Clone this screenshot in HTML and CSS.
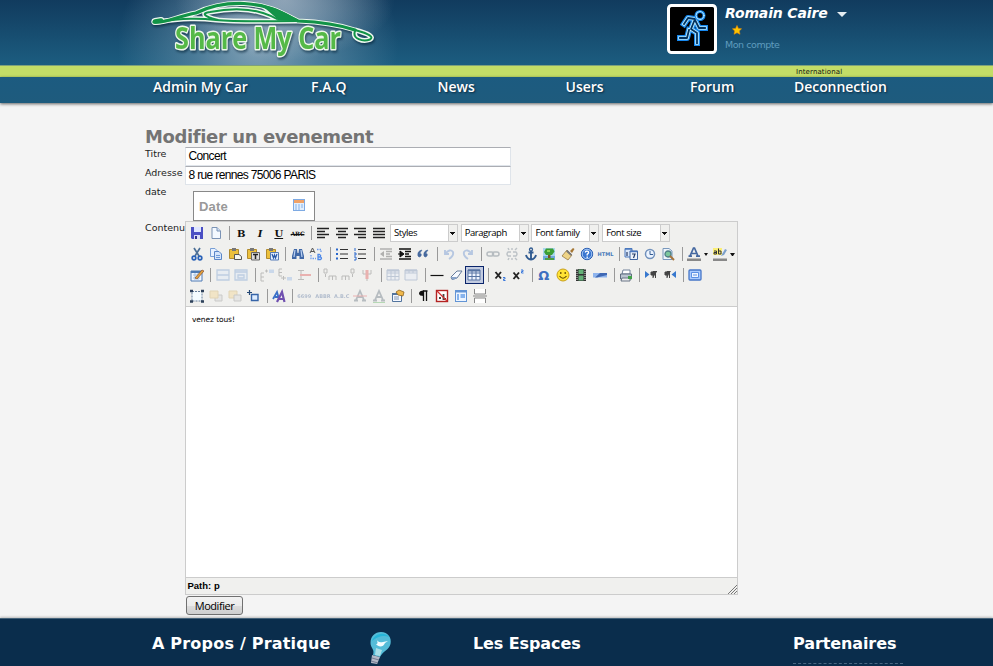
FILE: index.html
```html
<!DOCTYPE html>
<html lang="fr">
<head>
<meta charset="utf-8">
<title>Share My Car</title>
<link rel="stylesheet" href="styles.css">
</head>
<body>
<header class="top">
  <a class="logo">
    <svg width="234" height="62" viewBox="0 0 234 62">
      <g fill="none" stroke-linecap="round" stroke-linejoin="round">
        <g stroke="#eef7f1" stroke-width="5"><path d="M8 22C18 24 32 16 50 13C64 6 82 3 98 3.500C125 5 138 14 152 21C176 22 194 25 209 30C224 34 228 37 224 39.500C217 42 206 39 209 31M8 22C40 18 53 18 70 20C92 22 122 21 150 21M72 20C56 16 56 13 64 12C84 8 110 7 131 19"/><path d="M9 21.500L15 20.500" stroke-width="7"/></g>
        <path d="M114 5C130 8 142 15 154 21L131 20Z" fill="#129347" stroke="#eef7f1" stroke-width="2"/>
        <g stroke="#129347" stroke-width="2"><path stroke-width="3.200" d="M8 22C18 24 32 16 50 13C64 6 82 3 98 3.500C125 5 138 14 152 21C176 22 194 25 209 30"/><path d="M209 30C224 34 228 37 224 39.500C217 42 206 39 209 31M8 22C40 18 53 18 70 20C92 22 122 21 150 21M72 20C56 16 56 13 64 12C84 8 110 7 131 19"/><path d="M9 21.500L15 20.500" stroke-width="4.500"/></g>
        <path d="M112 4C130 7 142 14 154 21L131 20.500L133 17Z" fill="#129347"/>
      </g>
      <text class="brand" x="29" y="49" textLength="166" lengthAdjust="spacingAndGlyphs">Share My Car</text>
    </svg>
  </a>
  <div class="account">
    <svg class="avatar" width="50" height="50" viewBox="0 0 50 50">
      <rect x="1.500" y="1.500" width="47" height="47" rx="3" fill="#000" stroke="#fff" stroke-width="3"/>
      <g fill="none" stroke-linecap="square" stroke-linejoin="round">
        <path d="M17 20L21 14L28 15L24 25L30 29V39M28 16L32 24H38M22 26L20 34H13" stroke="#1688ef" stroke-width="6"/>
        <path d="M17 20L21 14L28 15L24 25L30 29V39M28 16L32 24H38M22 26L20 34H13" stroke="#b9eaff" stroke-width="3.600"/>
        <path d="M17 20L21 14L28 15L24 25L30 29V39M28 16L32 24H38M22 26L20 34H13" stroke="#02315e" stroke-width="1.800"/>
        <circle cx="33" cy="11.500" r="4" stroke="#1688ef" stroke-width="3"/><circle cx="33" cy="11.500" r="4" stroke="#b9eaff"/>
      </g>
    </svg>
    <div class="who">
      <div class="name"><span>Romain Caire</span><i class="caret"></i></div>
      <svg class="star" width="10" height="10" viewBox="0 0 10 10"><path d="M5 .4L6.400 3.400L9.600 3.700L7.300 6L8 9.300L5 7.700L2 9.300L2.700 6L.4 3.700L3.600 3.400Z" fill="#ffc400" stroke="#e88c00" stroke-width=".6"/></svg>
      <div class="mon">Mon compte</div>
    </div>
  </div>
</header>
<div class="strip"><span>International</span></div>
<nav class="menu">
  <a class="m1">Admin My Car</a><a>F.A.Q</a><a>News</a><a>Users</a><a>Forum</a><a>Deconnection</a>
</nav>

<main class="page">
  <h1><span>Modifier un evenement</span></h1>
  <form class="form">
    <label>Titre</label><div class="input"><span>Concert</span></div>
    <label>Adresse</label><div class="input"><span>8 rue rennes 75006 PARIS</span></div>
    <label>date</label>
    <div class="date"><span>Date</span>
      <svg width="12" height="12" viewBox="0 0 12 12"><rect x=".5" y=".5" width="11" height="11" fill="#e3effc" stroke="#7eaae3"/><path d="M1 1H11V4H1Z" fill="#f0a267"/><path d="M2 6H10M2 8H10M2 10H8" stroke="#86b2ea" stroke-dasharray="2 1"/></svg>
    </div>
    <label>Contenu</label>
    <div class="editor">
      <div class="tools">
        <div class="row">
          <b><svg viewBox="0 0 14 14"><path d="M1 1H13V13H2L1 12Z" fill="#4a4fc4"/><path d="M4 1H11V6H4Z" fill="#dfe6ff"/><path d="M4 9H10V13H4Z" fill="#d9dcf5"/><path d="M5 10H7V13H5Z" fill="#303090"/></svg></b>
          <b><svg viewBox="0 0 14 14"><path d="M3 1.500H8L11.500 5V12.500H3Z" fill="#f4f9ff" stroke="#7b93b5"/><path d="M8 1.500V5H11.500" fill="#cfe0f5" stroke="#7b93b5"/></svg></b><i></i>
          <b class="g">B</b><b class="g it">I</b><b class="g un">U</b><b class="g abc">ABC</b><i></i>
          <b><svg viewBox="0 0 14 14"><path d="M1 2.500H13M1 5.500H9M1 8.500H13M1 11.500H9" stroke="#222" stroke-width="1.400"/></svg></b>
          <b><svg viewBox="0 0 14 14"><path d="M1 2.500H13M3 5.500H11M1 8.500H13M3 11.500H11" stroke="#222" stroke-width="1.400"/></svg></b>
          <b><svg viewBox="0 0 14 14"><path d="M1 2.500H13M5 5.500H13M1 8.500H13M5 11.500H13" stroke="#222" stroke-width="1.400"/></svg></b>
          <b><svg viewBox="0 0 14 14"><path d="M1 2.500H13M1 5.500H13M1 8.500H13M1 11.500H13" stroke="#222" stroke-width="1.400"/></svg></b>
          <div class="sel"><span>Styles</span></div><div class="sel"><span>Paragraph</span></div><div class="sel"><span>Font family</span></div><div class="sel"><span>Font size</span></div>
        </div>
        <div class="row">
          <b><svg viewBox="0 0 14 14"><path d="M4 1L9 9M10 1L5 9" stroke="#4c6f96" stroke-width="1.700"/><circle cx="4" cy="11" r="1.800" fill="none" stroke="#2a62b8" stroke-width="1.700"/><circle cx="10" cy="11" r="1.800" fill="none" stroke="#2a62b8" stroke-width="1.700"/></svg></b>
          <b><svg viewBox="0 0 14 14"><path d="M1.500 1.500H6L8.500 4V9.500H1.500Z" fill="#e8f1ff" stroke="#789fd5"/><path d="M5.500 4.500H10L12.500 7V12.500H5.500Z" fill="#d4e4fb" stroke="#5a86c8"/><path d="M7 8.500H11M7 10.500H11" stroke="#6d99d8"/></svg></b>
          <b><svg viewBox="0 0 14 14"><path d="M1.500 2.500H10.500V11.500H1.500Z" fill="#ecc03c" stroke="#b08a2e"/><path d="M4 1H8V4H4Z" fill="#777"/><path d="M6.500 7.500H11L13.500 9.500V12.500H6.500Z" fill="#f7f7ee" stroke="#555"/></svg></b>
          <b><svg viewBox="0 0 14 14"><path d="M1.500 2.500H10.500V11.500H1.500Z" fill="#ecc03c" stroke="#b08a2e"/><path d="M4 1H8V4H4Z" fill="#777"/><path d="M5.500 5.500H13.500V13H5.500Z" fill="#ddd" stroke="#666"/><path d="M7 7.500H12M9.500 7V12" stroke="#222" stroke-width="1.500"/></svg></b>
          <b><svg viewBox="0 0 14 14"><path d="M1.500 2.500H10.500V11.500H1.500Z" fill="#ecc03c" stroke="#b08a2e"/><path d="M4 1H8V4H4Z" fill="#777"/><path d="M5.500 5.500H13.500V13H5.500Z" fill="#e4eeff" stroke="#557bb8"/><path d="M7 7L8.500 11L9.500 8L10.500 11L12 7" fill="none" stroke="#2757a8" stroke-width="1.200"/></svg></b><i></i>
          <b><svg viewBox="0 0 14 14"><path d="M3 2H6L6.500 6H7.500L8 2H11L13 9V12H8.500V9H5.500V12H1V9Z" fill="#4169a8"/><path d="M4 3L3 10M10 3L11 10" stroke="#bcd2f3" stroke-width="1.200"/></svg></b>
          <b><svg viewBox="0 0 14 14"><path d="M1 6L3.500 1L6 6M2 4.500H5" fill="none" stroke="#555"/><path d="M9 7.500V12.500H11.500Q13.500 11.200 11.500 10H9H11Q12.500 8.500 10.500 7.500Z" fill="none" stroke="#4c88e8" stroke-width="1.300"/><path d="M8 2.500H12V5M2 8V11.500H7" fill="none" stroke="#6a9aec" stroke-width="1.300" stroke-dasharray="1.500 1"/></svg></b><i></i>
          <b><svg viewBox="0 0 14 14"><path d="M5 2.500H13M5 7H13M5 11.500H13" stroke="#333" stroke-width="1.200"/><path d="M1 2.500H3M1 7H3M1 11.500H3" stroke="#2867cd" stroke-width="2"/></svg></b>
          <b><svg viewBox="0 0 14 14"><path d="M5 2.500H13M5 7H13M5 11.500H13" stroke="#333" stroke-width="1.200"/><path d="M2 1V4M1 6H3V8H1M1 10H3V13H1" stroke="#2867cd" fill="none"/></svg></b><i></i>
          <b class="off"><svg viewBox="0 0 14 14"><path d="M1 2H13M7 4.500H13M7 7H11M7 9.500H13M1 12H13" stroke="#333" stroke-width="1.300"/><path d="M5 4V10L1 7ZM4 7H6" fill="#333"/></svg></b>
          <b><svg viewBox="0 0 14 14"><path d="M1 2H13M7 4.500H13M7 7H11M7 9.500H13M1 12H13" stroke="#111" stroke-width="1.400"/><path d="M2 4V10L6 7ZM0 7H3" fill="#111" stroke="#111"/></svg></b>
          <b><svg viewBox="0 0 14 14"><path d="M6 3Q1 4 2 9Q3 11 5 9Q6 6 3.500 6.500ZM12 3Q7 4 8 9Q9 11 11 9Q12 6 9.500 6.500Z" fill="#45689d" stroke="#45689d" stroke-width=".6"/></svg></b><i></i>
          <b class="off"><svg viewBox="0 0 14 14"><path d="M3 3V7H7M3 7Q8 1 11 5Q12 9 7 12" fill="none" stroke="#4477c8" stroke-width="1.900"/></svg></b>
          <b class="off"><svg viewBox="0 0 14 14"><path d="M11 3V7H7M11 7Q6 1 3 5Q2 9 7 12" fill="none" stroke="#4477c8" stroke-width="1.900"/></svg></b><i></i>
          <b class="off"><svg viewBox="0 0 14 14"><rect x="1" y="5" width="6.500" height="4" rx="2" fill="none" stroke="#456" stroke-width="1.500"/><rect x="6.500" y="5" width="6.500" height="4" rx="2" fill="none" stroke="#456" stroke-width="1.500"/></svg></b>
          <b class="off"><svg viewBox="0 0 14 14"><path d="M6 5H3Q1 7 3 9H6M8 5H11Q13 7 11 9H8M4 3L3 1M7 3V1M10 3L12 1M4 11L3 13M7 11V13M10 11L12 13" fill="none" stroke="#567" stroke-width="1.400"/></svg></b>
          <b><svg viewBox="0 0 14 14"><circle cx="7" cy="2.500" r="1.500" fill="none" stroke="#315b91" stroke-width="1.300"/><path d="M7 4V12M4.500 5.500H9.500M2 8Q3 12 7 12.500Q11 12 12 8" fill="none" stroke="#315b91" stroke-width="1.900"/></svg></b>
          <b><svg viewBox="0 0 14 14"><path d="M1 1H13V9H1Z" fill="#a9d7ef"/><path d="M1 9H13V13H1Z" fill="#6fa9dc"/><path d="M6 7H8.500V12H6Z" fill="#7a5125"/><path d="M3 11H12V13H3Z" fill="#4b9e41"/><path d="M4 1.500H11L12.500 4.500L10 8H4L2 5Z" fill="#3c9d35"/><path d="M5 3H8V5H5Z" fill="#8ad45a"/></svg></b>
          <b><svg viewBox="0 0 14 14"><path d="M9 4L12 1L13.500 2L11 6Z" fill="#a67733"/><path d="M6 3L11 8L7 13L1 9Z" fill="#efd486" stroke="#8b6c31" stroke-width=".7"/><path d="M6.500 3L11 7.500L10 9L5 4.500Z" fill="#777"/></svg></b>
          <b><svg viewBox="0 0 14 14"><circle cx="7" cy="7" r="5.700" fill="#3976d1" stroke="#2357ad"/><circle cx="7" cy="7" r="4.800" fill="none" stroke="#a9caf5"/><path d="M5.200 5.500Q6 3.500 8 4.300Q9.500 5.800 7.200 7.200V8.500M7.200 9.500V11" fill="none" stroke="#fff" stroke-width="1.300"/></svg></b>
          <b class="g html">HTML</b><i></i>
          <b><svg viewBox="0 0 14 14"><path d="M1 1.500H8V10H1Z" fill="#dce9fb" stroke="#4b78be"/><path d="M6 4H13.500V12.500H6Z" fill="#edf3fb" stroke="#4166a2"/><path d="M1 2H8M6 4.500H13.500" stroke="#4b78be" stroke-width="1.700"/><path d="M3 5V9M8 7H11L9.500 11" fill="none" stroke="#263c67" stroke-width="1.200"/></svg></b>
          <b><svg viewBox="0 0 14 14"><circle cx="7" cy="7" r="4.500" fill="#ecf4ff" stroke="#7191bc" stroke-width="1.500"/><path d="M7 4V7.500H10" fill="none" stroke="#345c92"/></svg></b>
          <b><svg viewBox="0 0 14 14"><path d="M2 1.500H8L11 4V12.500H2Z" fill="#eef4fb" stroke="#7998bd"/><circle cx="7" cy="7" r="3" fill="#7cc79c" stroke="#4e7f86" stroke-width="1.300"/><path d="M9 9L13 13" stroke="#a5733b" stroke-width="2"/></svg></b><i></i>
          <b class="color"><svg viewBox="0 0 14 14"><path d="M3 9L6.500 1H7.500L11 9M4.500 6.500H9.500M1.500 9.200H5M9 9.200H13" fill="none" stroke="#4568a0" stroke-width="1.700"/><path d="M0 11.500H14V14H0Z" fill="#888"/></svg></b><u></u>
          <b class="color"><svg viewBox="0 0 14 14"><path d="M0 1H9V8H0Z" fill="#fbef77"/><path d="M1 4H3.500V7H1V5.500H3.500M5.500 1.500V7H8V4H5.500" fill="none" stroke="#333"/><path d="M8 9L12 2L14 3L11 8Z" fill="#7b9fc9"/><path d="M0 11.500H14V14H0Z" fill="#888"/></svg></b><u></u>
        </div>
        <div class="row">
          <b><svg viewBox="0 0 14 14"><path d="M1 3H12V13H1Z" fill="#f2f7ff" stroke="#4e7bb4"/><path d="M1 4H12" stroke="#4e7bb4" stroke-width="2"/><path d="M3 7H10M3 10H10M5 5V12M8 5V12" stroke="#a9c3e1"/><path d="M5 10L12 2L14 3L7 11Z" fill="#e5a43c" stroke="#884d2b" stroke-width=".7"/></svg></b><i></i>
          <b class="off"><svg viewBox="0 0 14 14"><path d="M1 2H13V12H1ZM1 7H13" fill="#d5e4fb" stroke="#5b8bca" stroke-width="1.300"/></svg></b>
          <b class="off"><svg viewBox="0 0 14 14"><path d="M1 2H13V12H1ZM1 4H13M4 7H10V10H4Z" fill="#d5e4fb" stroke="#5b8bca" stroke-width="1.300"/></svg></b><i></i>
          <b class="off"><svg viewBox="0 0 14 14"><path d="M4 5H1V13H4M1 9H4M5 3H8M6.500 1.500V4.500" stroke="#555" fill="none"/><path d="M9 1.500H14V5H9Z" fill="#7fa8e2"/></svg></b>
          <b class="off"><svg viewBox="0 0 14 14"><path d="M4 1H1V8H4M1 4.500H4M3 10H8M5.500 8V12" stroke="#555" fill="none"/><path d="M9 9H14V12.500H9Z" fill="#7fa8e2"/></svg></b>
          <b class="off"><svg viewBox="0 0 14 14"><path d="M1 2.500H7M1 11.500H7M4 3V11" stroke="#555"/><path d="M3 7H14" stroke="#d33" stroke-width="2"/></svg></b><i></i>
          <b class="off"><svg viewBox="0 0 14 14"><path d="M1 1H4V5H1ZM2.500 6V9M6 12V8H13V12M9.500 8V12" fill="none" stroke="#555"/></svg></b>
          <b class="off"><svg viewBox="0 0 14 14"><path d="M10 1H13V5H10ZM11.500 6V9M1 12V8H8V12M4.500 8V12" fill="none" stroke="#555"/></svg></b>
          <b class="off"><svg viewBox="0 0 14 14"><path d="M3 2V6H11V2M7 6V13" fill="none" stroke="#555"/><path d="M7 2V11" stroke="#d33" stroke-width="3"/></svg></b><i></i>
          <b class="off"><svg viewBox="0 0 14 14"><path d="M1 2H13V12H1ZM1 5H13M1 8.500H13M5 2V12M9 2V12" fill="#e3ecfd" stroke="#5b78a8"/><path d="M1 2.500H13" stroke="#5b78a8" stroke-width="2"/></svg></b>
          <b class="off"><svg viewBox="0 0 14 14"><path d="M1 2H13V12H1ZM1 5H13M5 2V5M9 2V5" fill="#e3ecfd" stroke="#5b78a8"/><path d="M1 2.500H13" stroke="#5b78a8" stroke-width="2"/></svg></b><i></i>
          <b><svg viewBox="0 0 14 14"><path d="M.5 7.500H13.500" stroke="#111" stroke-width="1.200"/></svg></b>
          <b><svg viewBox="0 0 14 14"><path d="M2 9L8 3H13L8 10L3 11.500Z" fill="#f7faff" stroke="#667c9c"/><path d="M2 9H7L8 10L4 12Z" fill="#88a3ca"/></svg></b>
          <b class="on"><svg viewBox="0 0 14 14"><path d="M1 2H13V12H1ZM1 5H13M1 8.500H13M5 2V12M9 2V12" fill="#eef4ff" stroke="#5875a4"/><path d="M1 2.500H13" stroke="#5875a4" stroke-width="2"/></svg></b><i></i>
          <b><svg viewBox="0 0 14 14"><path d="M2.500 4L8 10.500M8 4L2.500 10.500" stroke="#222" stroke-width="1.900"/><path d="M10 9.500H12V11H10.500V12.500H12.500" fill="none" stroke="#3a78dc"/></svg></b>
          <b><svg viewBox="0 0 14 14"><path d="M2.500 4.500L8 11M8 4.500L2.500 11" stroke="#222" stroke-width="1.900"/><path d="M10 2H12V3.500H10.500V5H12.500" fill="none" stroke="#3a78dc"/></svg></b><i></i>
          <b class="g omega">Ω</b>
          <b><svg viewBox="0 0 14 14"><circle cx="7" cy="7" r="6" fill="#ffe334" stroke="#c9a01a"/><path d="M4.800 4V6M9.200 4V6M3.500 8Q7 12.500 10.500 8" fill="none" stroke="#5f4800" stroke-width="1.200"/></svg></b>
          <b><svg viewBox="0 0 14 14"><path d="M2 1H12V13H2Z" fill="#333"/><path d="M4.500 1.500H9.500V6H4.500ZM4.500 7.500H9.500V12.500H4.500Z" fill="#65b278"/><path d="M3 1V13M11 1V13" stroke="#ddd" stroke-dasharray="1 1"/></svg></b>
          <b><svg viewBox="0 0 14 14"><path d="M0 5H14V9.500H0Z" fill="#8eb4ed"/><path d="M7 5H14V7L4 9.500H2Z" fill="#4069b4"/></svg></b><i></i>
          <b><svg viewBox="0 0 14 14"><path d="M4 2H11V6H3Z" fill="#fff" stroke="#72839b"/><path d="M1.500 6H12.500V11H1.500Z" fill="#bac4d0" stroke="#5f6d7e"/><path d="M3 10H11V13H2Z" fill="#eee" stroke="#687586"/><path d="M9 8H13V11H9Z" fill="#40a047"/></svg></b><i></i>
          <b><svg viewBox="0 0 14 14"><path d="M1 3L5.500 6.500L1 10Z" fill="#3778ce"/><path d="M9 10V3.500H13M11.500 4V10M9 4H7V7H9Z" fill="#444" stroke="#444"/></svg></b>
          <b><svg viewBox="0 0 14 14"><path d="M13 3L8.500 6.500L13 10Z" fill="#3778ce"/><path d="M4 10V3.500H7.500M6.500 4V10M4 4H2V7H4Z" fill="#444" stroke="#444"/></svg></b><i></i>
          <b><svg viewBox="0 0 14 14"><rect x="1" y="2" width="12" height="10" rx="1" fill="#aaccff" stroke="#4777c8" stroke-width="1.300"/><path d="M3.500 4.500H10.500V9.500H3.500Z" fill="#eff6ff" stroke="#5c91e4"/><path d="M5 7H9" stroke="#5c91e4"/></svg></b>
        </div>
        <div class="row">
          <b><svg viewBox="0 0 14 14"><path d="M2 2.500H12V12H2Z" fill="#f5fcff" stroke="#677f9c" stroke-dasharray="2 1"/><path d="M0 2H3M11 2H14M0 12.500H3M11 12.500H14" stroke="#2d405a" stroke-width="2.500"/></svg></b>
          <b class="off2"><svg viewBox="0 0 14 14"><path d="M6 6H13V12H6Z" fill="#ddd" stroke="#aaa"/><path d="M1 2H9V9H1Z" fill="#f3dba6" stroke="#d5bd8a"/></svg></b>
          <b class="off2"><svg viewBox="0 0 14 14"><path d="M1 2H9V9H1Z" fill="#f3dba6" stroke="#d5bd8a"/><path d="M6 6H13V12H6Z" fill="#ddd" stroke="#aaa"/></svg></b>
          <b><svg viewBox="0 0 14 14"><path d="M5.500 5.500H12V11.500H5.500Z" fill="#ddecff" stroke="#3664a8" stroke-width="1.400"/><path d="M3.500 1V6M1 3.500H6" stroke="#244875" stroke-width="1.200"/></svg></b><i></i>
          <b><svg viewBox="0 0 14 14"><path d="M1 10L5 3L7 10M3 8H7" fill="none" stroke="#3a70c8" stroke-width="1.800"/><path d="M5 13L10 3L12.500 13M7 10H12" fill="none" stroke="#7050b0" stroke-width="2.200"/></svg></b><i></i>
          <b class="g tiny off2">6699</b><b class="g tiny off2">ABBR</b><b class="g tiny off2">A.B.C</b>
          <b class="off"><svg viewBox="0 0 14 14"><path d="M3 11L7 2L11 11M4 8H10M1 11.500H5M9 11.500H13" fill="none" stroke="#456" stroke-width="1.800"/><path d="M0 7H14" stroke="#d33"/></svg></b>
          <b class="off"><svg viewBox="0 0 14 14"><path d="M3 11L7 2L11 11M4 8H10M1 11.500H5M9 11.500H13" fill="none" stroke="#456" stroke-width="1.800"/><path d="M1 13.500H13" stroke="#4a4"/></svg></b>
          <b><svg viewBox="0 0 14 14"><path d="M1.500 4.500H10.500V12.500H1.500Z" fill="#f5f8ff" stroke="#52749e"/><path d="M1 5H11" stroke="#52749e" stroke-width="2"/><path d="M5 3L8 1L13 3L12 7L7 6Z" fill="#efb84c" stroke="#8f6520" stroke-width=".8"/><path d="M3 8H8M3 10H8" stroke="#8095b4"/></svg></b><i></i>
          <b><svg viewBox="0 0 14 14"><path d="M7.500 12V2H11.500M10.500 2V12" fill="none" stroke="#111" stroke-width="1.300"/><path d="M8 1.500Q3 1.500 3 4.500Q3 7 8 7Z" fill="#111"/></svg></b>
          <b><svg viewBox="0 0 14 14"><rect x="1.500" y="1.500" width="11" height="11" fill="#fff" stroke="#b22323" stroke-width="1.400"/><path d="M4 9H6M8.500 5V10H11" fill="none" stroke="#444" stroke-width="1.800"/><path d="M2 2L12 12" stroke="#d23232" stroke-width="1.300"/></svg></b>
          <b><svg viewBox="0 0 14 14"><rect x="1.500" y="1.500" width="11" height="11" fill="#edf5ff" stroke="#6294d5"/><path d="M1 2.500H13" stroke="#6294d5" stroke-width="2"/><path d="M3 5H5V11H3ZM6.500 5H11V9H6.500Z" fill="#86b3ed"/></svg></b>
          <b><svg viewBox="0 0 14 14"><path d="M1.500 0V5H12.500V0M1.500 14V9H12.500V14" fill="#fff" stroke="#888"/><path d="M0 7H14" stroke="#888"/></svg></b>
        </div>
      </div>
      <div class="body"><p>venez tous!</p></div>
      <div class="path"><span>Path: p</span><svg width="9" height="9" viewBox="0 0 9 9"><path d="M0 9L9 0M3 9L9 3M6 9L9 6" stroke="#777"/></svg></div>
    </div>
  </form>
  <button class="btn"><span>Modifier</span></button>
</main>
<footer class="foot">
  <h2 class="f1">A Propos / Pratique</h2>
  <svg class="bulb" width="24" height="34" viewBox="0 0 24 34"><path d="M1.500 11C1.500 4 6 0 12 0C19 0 23 6 21.500 12C20 18 14 19 11 25L4 23C6 17 1.500 16 1.500 11Z" fill="#54bcd8"/><path d="M3 9C5 2 15-1 20 5C15 3 9 4 3 9Z" fill="#27b6d8"/><path d="M7 6C8 10 11 11 14 10L19 9L16 11C14 16 9 15 7 12C9 12 9 10 7 6Z" fill="#f4fdff"/><path d="M7 16L6 23L11 24L13 18Z" fill="#a9dfe8"/><path d="M3 23L11 25L8 32L2 31Z" fill="#b3b8c6"/><path d="M3 26L10 28M2 29L9 31" stroke="#747c92"/></svg>
  <h2 class="f2">Les Espaces</h2>
  <div class="f3"><h2>Partenaires</h2></div>
</footer>
</body>
</html>
```

FILE: styles.css
```css
* { box-sizing: border-box; }
body { margin: 0; width: 993px; height: 666px; overflow: hidden; background: #f4f4f4; font-family: "DejaVu Sans", sans-serif; color: #222; display: flex; flex-direction: column; }
h1, h2, p { margin: 0; }
span, a, h2 { white-space: nowrap; }

.top { height: 65px; flex: none; display: flex; background: radial-gradient(ellipse 110px 60px at 285px 0, rgba(185,195,208,.6), rgba(150,170,190,0)), radial-gradient(ellipse 140px 125px at 258px 45px, rgba(150,176,194,.85), rgba(115,152,176,.55) 45%, rgba(60,110,145,0)), linear-gradient(#113b5e, #1c5d80); }
.logo { margin-left: 146px; width: 234px; height: 62px; }
.logo svg { display: block; filter: drop-shadow(1px 2px 1px rgba(0,30,50,.55)); }
.brand { font: bold 31px "Open Sans", sans-serif; fill: #55b947; stroke: #eef8ec; stroke-width: 3px; paint-order: stroke; stroke-linejoin: round; }
.account { margin: 4px 0 0 287px; display: flex; gap: 8px; }
.who { display: flex; flex-direction: column; }
.name { display: flex; align-items: center; gap: 9px; height: 18px; font: italic bold 14px "DejaVu Sans", sans-serif; letter-spacing: -.15px; color: #fff; }
.caret { border: 5px solid transparent; border-top-color: #e4edf2; border-bottom: 0; margin-top: 3px; }
.star { margin: 3px 0 0 7px; }
.mon { margin-top: 4px; font-size: 9.500px; letter-spacing: -.45px; line-height: 12px; color: #5f9cbe; }

.strip { height: 12px; flex: none; background: #c3dd67; border-top: 1px solid #7fa17a; font-size: 7px; letter-spacing: .12px; line-height: 12px; color: #111; }
.strip span { margin-left: 796px; }
.menu { height: 26px; flex: none; position: relative; display: grid; grid-template-columns: 153px 158px 126.500px 128px 124.500px 104px 1fr; background: linear-gradient(#1c5b80, #1e5b7d); box-shadow: 0 1px 3px rgba(0,0,0,.6); color: #fff; font: 600 14px/20px "Open Sans", sans-serif; text-shadow: 1px 1px 2px #0a2a40; }
.m1 { grid-column: 2; }
.menu a:last-child { letter-spacing: -.05px; }

.page { height: 515px; flex: none; padding: 23px 0 0 145px; }
h1 { height: 21px; font: bold 18px/22px "DejaVu Sans", sans-serif; letter-spacing: -.38px; color: #747474; }
.form { display: grid; grid-template-columns: 40px 553px; grid-template-rows: 19px 19px 36px 374px; }
label { font-size: 9.500px; line-height: 14px; white-space: nowrap; }
.input { width: 326px; height: 19px; background: #fff; border: 1px solid #dfe4ea; border-top-color: #abadb3; padding-left: 2.500px; font: 12px/17px "Liberation Sans", sans-serif; letter-spacing: -.65px; color: #000; }
.date { margin: 6px 0 0 8px; width: 122px; height: 30px; border: 1px solid #888; background: #fff; display: flex; align-items: center; justify-content: space-between; padding: 0 9px 0 5px; font: bold 13px "Liberation Sans", sans-serif; color: #999; }
.date span { letter-spacing: .2px; }
.date svg { margin-top: -2px; }
.editor { width: 553px; height: 374px; border: 1px solid #ccc; background: #fff; display: flex; flex-direction: column; }
.tools { height: 85px; background: #f0f0ee; border-bottom: 1px solid #ccc; padding: .5px 0 0 1.700px; }
.row { display: flex; height: 21px; align-items: center; }
.row b { width: 18.760px; height: 19px; flex: none; display: flex; align-items: center; justify-content: center; }
.row svg { width: 14px; height: 14px; display: block; }
.row i { width: 2.700px; height: 14px; flex: none; border-left: 1px solid #999; margin-left: 4px; }
.row .color { width: 18px; }
.row u { width: 5px; border: 2.500px solid transparent; border-top: 3px solid #111; border-bottom: 0; margin: 0 2.500px 0 1px; }
.off { opacity: .33; }
.off2 { opacity: .55; }
.row .on { background: #c2cbe0; border: 1px solid #0a246a; height: 18px; }
.g { font: bold 10px "DejaVu Serif", serif; color: #111; }
.it { font-style: italic; }
.un { text-decoration: underline; }
.abc { font-size: 6px; text-decoration: line-through; letter-spacing: -.3px; }
.html { font: bold 5px "DejaVu Sans", sans-serif; color: #4779b9; }
.tiny { font: bold 5px "DejaVu Sans", sans-serif; color: #8094b3; }
.omega { font: bold 13px "DejaVu Sans", sans-serif; color: #3d6fc0; }
.sel { width: 68px; height: 18px; margin: 0 0 0 2.700px; border: 1px solid #ccc; background: #fff; font: 9.500px/16px "Open Sans", sans-serif; letter-spacing: -.45px; color: #000; padding-left: 3px; display: flex; justify-content: space-between; }
.sel:first-of-type { margin-left: 1.500px; }
.sel::after { content: ""; width: 8px; flex: none; border-left: 1px solid #ccc; background: linear-gradient(#111, #111) 1px 7px/5px 1px no-repeat, linear-gradient(#111, #111) 2px 8px/3px 1px no-repeat, linear-gradient(#111, #111) 3px 9px/1px 1px no-repeat, #f0f0ee; }
.body { flex: 1; padding: 8px 6px; font-size: 7.500px; letter-spacing: -.1px; line-height: 9px; color: #000; }
.path { height: 17px; background: #f0f0ee; border-top: 1px solid #ccc; display: flex; justify-content: space-between; align-items: flex-end; padding-left: 1.500px; font: bold 9.500px/16px "Liberation Sans", sans-serif; color: #000; }
.btn { display: block; margin: 1px 0 0 41px; width: 57px; height: 19px; padding: 0 0 1px; border: 1px solid #707070; border-radius: 3px; background: linear-gradient(#f2f2f2, #ebebeb 50%, #ddd 50%, #cfcfcf); font: 11px/15px "Open Sans", sans-serif; letter-spacing: -.45px; color: #000; }

.foot { flex: 1; display: grid; grid-template-columns: 152px 218px 103px 320px 110px; background: #0a2d4c; border-top: 1px solid #45637a; box-shadow: 0 -1px 2px #bbb; }
.foot h2 { font: bold 16px/20px "DejaVu Sans", sans-serif; letter-spacing: -.1px; color: #fff; margin-top: 15px; }
.foot .f1 { grid-column: 2; letter-spacing: .2px; }
.bulb { margin: 13px 0 0 -1px; }
.f3 { border-bottom: 1px dashed #486782; height: 45px; }
```
